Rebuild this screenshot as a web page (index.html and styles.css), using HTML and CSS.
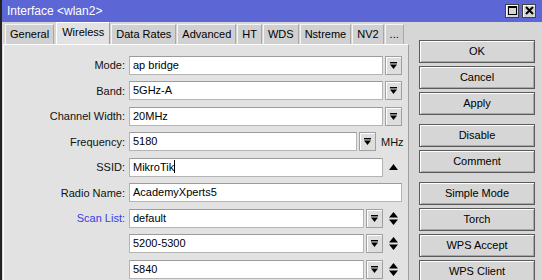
FILE: index.html
```html
<!DOCTYPE html>
<html lang="en">
<head>
    <meta charset="UTF-8">
    <title>Interface &lt;wlan2&gt;</title>
    <link rel="stylesheet" href="styles.css">
</head>
<body>

    <div class="window">
        <!-- Title bar -->
        <div class="titlebar">
            <span class="title">Interface &lt;wlan2&gt;</span>
            <div class="title-btns">
                <span class="tbtn">
                    <svg width="9" height="9" viewBox="0 0 9 9"><rect x="0.5" y="0.5" width="8" height="8" fill="none" stroke="#000"/><line x1="0" y1="1.5" x2="9" y2="1.5" stroke="#000"/></svg>
                </span>
                <span class="tbtn">
                    <svg width="9" height="9" viewBox="0 0 9 9"><path d="M1 1 L8 8 M8 1 L1 8" stroke="#000" stroke-width="2"/></svg>
                </span>
            </div>
        </div>

        <div class="main">
            <!-- Tabs and form -->
            <div class="tabs-area">
                <div class="tabs">
                    <span class="tab">General</span>
                    <span class="tab active">Wireless</span>
                    <span class="tab">Data Rates</span>
                    <span class="tab">Advanced</span>
                    <span class="tab">HT</span>
                    <span class="tab">WDS</span>
                    <span class="tab">Nstreme</span>
                    <span class="tab">NV2</span>
                    <span class="tab">...</span>
                </div>

                <div class="panel">
                    <div class="row">
                        <span class="lbl">Mode:</span>
                        <div class="field">
                            <div class="input">ap bridge</div>
                            <span class="dd"><svg width="7" height="7" viewBox="0 0 7 7"><rect x="0" y="0" width="7" height="1.4" fill="#000"/><path d="M0 2.5 H7 L3.5 7 Z" fill="#000"/></svg></span>
                        </div>
                    </div>
                    <div class="row">
                        <span class="lbl">Band:</span>
                        <div class="field">
                            <div class="input">5GHz-A</div>
                            <span class="dd"><svg width="7" height="7" viewBox="0 0 7 7"><rect x="0" y="0" width="7" height="1.4" fill="#000"/><path d="M0 2.5 H7 L3.5 7 Z" fill="#000"/></svg></span>
                        </div>
                    </div>
                    <div class="row">
                        <span class="lbl">Channel Width:</span>
                        <div class="field">
                            <div class="input">20MHz</div>
                            <span class="dd"><svg width="7" height="7" viewBox="0 0 7 7"><rect x="0" y="0" width="7" height="1.4" fill="#000"/><path d="M0 2.5 H7 L3.5 7 Z" fill="#000"/></svg></span>
                        </div>
                    </div>
                    <div class="row">
                        <span class="lbl">Frequency:</span>
                        <div class="field">
                            <div class="input">5180</div>
                            <span class="dd"><svg width="7" height="7" viewBox="0 0 7 7"><rect x="0" y="0" width="7" height="1.4" fill="#000"/><path d="M0 2.5 H7 L3.5 7 Z" fill="#000"/></svg></span>
                            <span class="unit">MHz</span>
                        </div>
                    </div>
                    <div class="row">
                        <span class="lbl">SSID:</span>
                        <div class="field">
                            <div class="input">MikroTik<span class="caret"></span></div>
                            <span class="sp"><svg width="9" height="6" viewBox="0 0 9 6"><path d="M0 6 L4.5 0 L9 6 Z" fill="#000"/></svg></span>
                        </div>
                    </div>
                    <div class="row">
                        <span class="lbl">Radio Name:</span>
                        <div class="field">
                            <div class="input">AcademyXperts5</div>
                        </div>
                    </div>
                    <div class="row">
                        <span class="lbl link">Scan List:</span>
                        <div class="field">
                            <div class="input">default</div>
                            <span class="dd"><svg width="7" height="7" viewBox="0 0 7 7"><rect x="0" y="0" width="7" height="1.4" fill="#000"/><path d="M0 2.5 H7 L3.5 7 Z" fill="#000"/></svg></span>
                            <span class="sp"><svg width="9" height="13" viewBox="0 0 9 13"><path d="M0 5.5 L4.5 0 L9 5.5 Z M0 7.5 H9 L4.5 13 Z" fill="#000"/></svg></span>
                        </div>
                    </div>
                    <div class="row">
                        <span class="lbl"></span>
                        <div class="field">
                            <div class="input">5200-5300</div>
                            <span class="dd"><svg width="7" height="7" viewBox="0 0 7 7"><rect x="0" y="0" width="7" height="1.4" fill="#000"/><path d="M0 2.5 H7 L3.5 7 Z" fill="#000"/></svg></span>
                            <span class="sp"><svg width="9" height="13" viewBox="0 0 9 13"><path d="M0 5.5 L4.5 0 L9 5.5 Z M0 7.5 H9 L4.5 13 Z" fill="#000"/></svg></span>
                        </div>
                    </div>
                    <div class="row">
                        <span class="lbl"></span>
                        <div class="field">
                            <div class="input">5840</div>
                            <span class="dd"><svg width="7" height="7" viewBox="0 0 7 7"><rect x="0" y="0" width="7" height="1.4" fill="#000"/><path d="M0 2.5 H7 L3.5 7 Z" fill="#000"/></svg></span>
                            <span class="sp"><svg width="9" height="13" viewBox="0 0 9 13"><path d="M0 5.5 L4.5 0 L9 5.5 Z M0 7.5 H9 L4.5 13 Z" fill="#000"/></svg></span>
                        </div>
                    </div>
                </div>
            </div>

            <!-- Action buttons -->
            <div class="buttons">
                <div class="group">
                    <button>OK</button>
                    <button>Cancel</button>
                    <button>Apply</button>
                </div>
                <div class="group">
                    <button>Disable</button>
                    <button>Comment</button>
                </div>
                <div class="group">
                    <button>Simple Mode</button>
                    <button>Torch</button>
                    <button>WPS Accept</button>
                    <button>WPS Client</button>
                </div>
            </div>
        </div>
    </div>

</body>
</html>
```

FILE: styles.css
```css
/* Reset */
* {
    margin: 0;
    padding: 0;
    box-sizing: border-box;
    font-family: "Liberation Sans", Arial, sans-serif;
}

body {
    width: 542px;
    height: 280px;
    overflow: hidden;
    background-color: #d4d4d4;
}

/* Window frame */
.window {
    height: 280px;
    border-left: 2px solid #222;
    background-color: #d6d6d6;
    display: flex;
    flex-direction: column;
}

/* Title bar */
.titlebar {
    height: 22px;
    background-color: #5c66d4;
    display: flex;
    align-items: center;
    justify-content: space-between;
    padding: 0 6px 0 5px;
}

.title {
    color: #fff;
    font-size: 12px;
}

.title-btns {
    display: flex;
    gap: 3px;
}

.tbtn {
    width: 14px;
    height: 14px;
    background-color: #d6d6d6;
    border: 1px solid #404040;
    box-shadow: inset 1px 1px 0 #fff;
    display: flex;
    align-items: center;
    justify-content: center;
}

/* Main area */
.main {
    flex-grow: 1;
    display: flex;
    gap: 10px;
    min-height: 0;
}

.tabs-area {
    width: 407px;
    flex-shrink: 0;
    padding-left: 1px;
    display: flex;
    flex-direction: column;
}

/* Tabs */
.tabs {
    display: flex;
    align-items: flex-end;
    height: 22px;
    padding-left: 2px;
    position: relative;
    z-index: 1;
}

.tab {
    flex-shrink: 0;
    white-space: nowrap;
    height: 20px;
    line-height: 19px;
    font-size: 11px;
    padding: 0 4px;
    margin-right: 1px;
    color: #000;
    background-color: #d0d0d0;
    border-top: 1px solid #f4f4f4;
    border-left: 1px solid #f4f4f4;
    border-right: 1px solid #a8a8a8;
}

.tab.active {
    height: 22px;
    line-height: 19px;
    padding: 0 5px;
    background-color: #e2e2e2;
    border-top: 1px solid #fff;
    border-left: 1px solid #fff;
    border-right: 1px solid #9a9a9a;
    margin: 0 1px 0 1px;
}

/* Form panel */
.panel {
    flex-grow: 1;
    background-color: #e2e2e2;
    border-top: 1px solid #fff;
    border-left: 1px solid #fff;
    border-right: 1px solid #a0a0a0;
    padding-top: 11px;
    display: flex;
    flex-direction: column;
    gap: 6.5px;
}

.row {
    display: flex;
    align-items: center;
    height: 19px;
    gap: 4px;
}

.lbl {
    width: 121px;
    text-align: right;
    font-size: 11px;
    color: #111;
}

.lbl.link {
    color: #3b3be6;
}

.field {
    width: 273px;
    height: 19px;
    display: flex;
    align-items: center;
    gap: 2px;
}

.input {
    flex-grow: 1;
    height: 19px;
    background-color: #fff;
    border: 1px solid #b4b4b4;
    border-top-color: #9c9c9c;
    font-size: 11px;
    line-height: 17px;
    padding-left: 3px;
    color: #000;
}

.caret {
    display: inline-block;
    width: 1px;
    height: 13px;
    background-color: #000;
    vertical-align: -2px;
}

.dd {
    width: 17px;
    height: 19px;
    flex-shrink: 0;
    border: 1px solid #a0a0a0;
    background-color: #dedede;
    box-shadow: inset 1px 1px 0 #fff;
    display: flex;
    align-items: center;
    justify-content: center;
}

.sp {
    width: 17px;
    flex-shrink: 0;
    display: flex;
    align-items: center;
    justify-content: center;
}

.unit {
    width: 24px;
    flex-shrink: 0;
    font-size: 11px;
    padding-left: 3px;
    color: #111;
}

/* Right-hand buttons */
.buttons {
    width: 116px;
    flex-shrink: 0;
    padding-top: 18px;
    display: flex;
    flex-direction: column;
    gap: 9px;
}

.group {
    display: flex;
    flex-direction: column;
    gap: 3px;
}

.buttons button {
    height: 23px;
    font-size: 11px;
    color: #000;
    background-color: #d6d6d6;
    border: 1px solid #5a5a5a;
    box-shadow: inset 1px 1px 0 #fff, inset -1px -1px 0 #a8a8a8;
}
```
